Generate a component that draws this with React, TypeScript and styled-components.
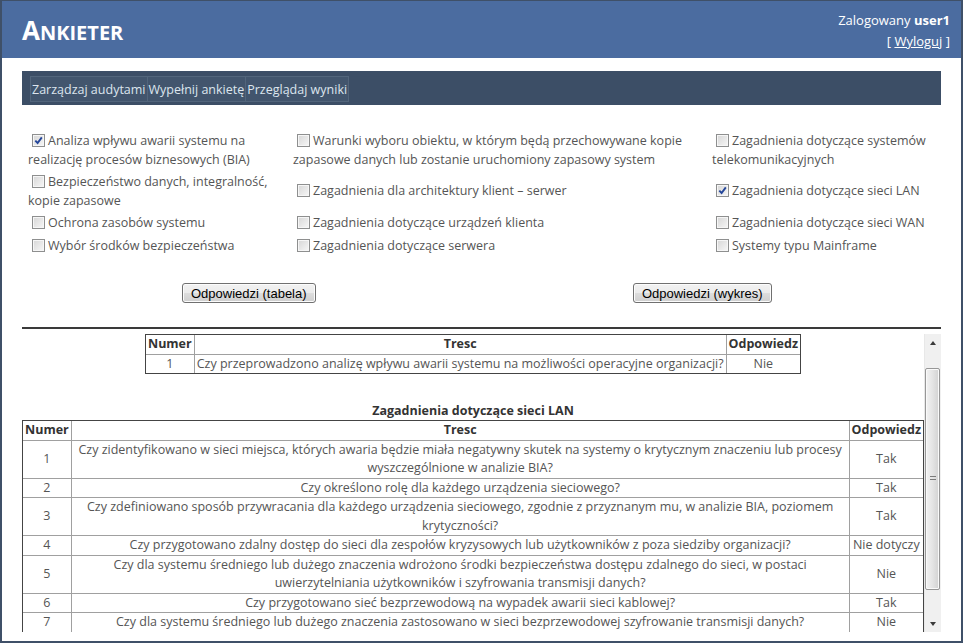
import React from 'react';
import styled, { createGlobalStyle } from 'styled-components';

const GlobalStyle = createGlobalStyle`
  html, body {
    margin: 0;
    padding: 0;
    background: #fff;
  }
  body {
    font-family: "Open Sans", "Noto Sans", sans-serif;
    font-size: 12.5px;
    color: #555;
  }
`;

const Frame = styled.div`
  box-sizing: border-box;
  width: 963px;
  height: 643px;
  border: 2px solid #3f5068;
  border-top-width: 1px;
  display: flex;
  flex-direction: column;
  overflow: hidden;
`;

const Header = styled.header`
  flex: none;
  height: 57px;
  background: #4b6ca0;
  color: #fff;
  display: flex;
  justify-content: space-between;
  align-items: flex-start;
  padding: 0 11px 0 20px;
`;

const Logo = styled.h1`
  margin: 0;
  padding-top: 14px;
  font: 700 26px/30px "Open Sans", sans-serif;
  small {
    font-size: 20px;
  }
`;

const UserBox = styled.div`
  padding-top: 9px;
  text-align: right;
  font-size: 13px;
  line-height: 21px;
  b {
    font-weight: 700;
  }
  a {
    color: #fff;
    text-decoration: underline;
  }
`;

const Main = styled.main`
  flex: 1;
  display: flex;
  flex-direction: column;
  padding: 13px 20px 0;
`;

const Nav = styled.nav`
  height: 34px;
  box-sizing: border-box;
  background: #3c4e66;
  padding: 5px 8px 3px;
  display: flex;
`;

const NavItem = styled.a`
  display: flex;
  align-items: center;
  height: 26px;
  box-sizing: border-box;
  padding: 0 1px;
  background: #42556d;
  border: 1px solid #52657b;
  color: #dde5ee;
  white-space: nowrap;
  & + & {
    margin-left: -1px;
  }
`;

const CheckGrid = styled.div`
  margin-top: 25px;
  padding-left: 6px;
  display: grid;
  grid-template-columns: 265px 419px 1fr;
  align-items: center;
`;

const CheckCell = styled.label`
  padding: 2px 0;
  line-height: 18.5px;
  color: #555;
`;

const Box = styled.span`
  position: relative;
  display: inline-block;
  width: 13px;
  height: 13px;
  box-sizing: border-box;
  margin: 0 3px 0 4px;
  vertical-align: -2px;
  border: 1px solid #8e8f8f;
  box-shadow: inset 0 0 0 1px #f6f6f6;
  background: linear-gradient(135deg, #d6d6d6, #f7f7f7);
  svg {
    position: absolute;
    left: 1px;
    top: 1px;
  }
`;

const ButtonRow = styled.div`
  margin-top: 26px;
  padding-right: 12px;
  display: grid;
  grid-template-columns: 1fr 1fr;
  justify-items: center;
`;

const Button = styled.button`
  height: 20px;
  padding: 0 8px;
  font: 13px "Liberation Sans", Arial, sans-serif;
  color: #000;
  border: 1px solid #707070;
  border-radius: 3px;
  background: linear-gradient(#f2f2f2 0%, #ebebeb 50%, #dddddd 51%, #cfcfcf 100%);
  box-shadow: inset 0 0 0 1px #fcfcfc;
`;

const Rule = styled.hr`
  margin: 24px 0 0;
  height: 2px;
  border: none;
  background: #3a3a3a;
`;

const Results = styled.div`
  margin-top: 5px;
  height: 298px;
  display: flex;
`;

const Viewport = styled.div`
  flex: 1;
  min-width: 0;
  overflow: hidden;
`;

/* drawn scrollbar: headless browsers hide the real one */
const ScrollBar = styled.div`
  flex: none;
  width: 16px;
  display: flex;
  flex-direction: column;
  background: #f0f0f0;
  border-left: 1px solid #e8e8e8;
`;

const ScrollButton = styled.div<{ $down?: boolean }>`
  flex: none;
  height: 17px;
  display: flex;
  align-items: center;
  justify-content: center;
  &::after {
    content: '';
    border-left: 3.5px solid transparent;
    border-right: 3.5px solid transparent;
    ${(p) => (p.$down ? 'border-top: 4px solid #3a3a3a;' : 'border-bottom: 4px solid #3a3a3a;')}
  }
`;

const Track = styled.div`
  flex: 1;
  padding-top: 17px;
`;

const Thumb = styled.div`
  height: 222px;
  margin: 0 1px 0 0;
  box-sizing: border-box;
  border: 1px solid #979797;
  border-radius: 2px;
  background:
    repeating-linear-gradient(to bottom, #7a7a7a 0 1px, transparent 1px 3px) center / 6px 6px no-repeat,
    linear-gradient(to right, #f3f3f3, #e4e4e4 50%, #d2d2d2);
  box-shadow: inset 0 0 0 1px #fafafa;
`;

const Table = styled.table<{ $full?: boolean }>`
  margin: 0 auto;
  width: ${(p) => (p.$full ? '100%' : 'auto')};
  border-collapse: separate;
  border-spacing: 0;
  border: 1px solid #444;
  line-height: 18.5px;
  & + & {
    margin-top: 29px;
  }
  caption {
    font-weight: 700;
    color: #333;
    line-height: 16px;
    padding-bottom: 1px;
  }
  th,
  td {
    padding: 0 2px;
    border-right: 1px solid #a0a0a0;
    border-bottom: 1px solid #a0a0a0;
    text-align: center;
  }
  th {
    font-weight: 700;
    color: #333;
  }
  td {
    color: #555;
  }
  th:last-child,
  td:last-child {
    border-right: none;
  }
  tr:last-child td {
    border-bottom: none;
  }
`;

const NumCol = styled.th`
  width: 40px;
`;

const AnsCol = styled.th`
  width: 68px;
  white-space: nowrap;
`;

const OneLine = styled.td`
  white-space: nowrap;
`;

const Tick = () => (
  <svg width="9" height="9" viewBox="0 0 9 9">
    <path d="M1.3 4.6 L3.6 7 L7.8 1.4" fill="none" stroke="#24469a" strokeWidth="1.9" />
  </svg>
);

const Check = ({ label, checked }: { label: string; checked?: boolean }) => (
  <CheckCell>
    <Box>{checked && <Tick />}</Box>
    {label}
  </CheckCell>
);

const categories = [
  { label: 'Analiza wpływu awarii systemu na realizację procesów biznesowych (BIA)', checked: true },
  { label: 'Warunki wyboru obiektu, w którym będą przechowywane kopie zapasowe danych lub zostanie uruchomiony zapasowy system' },
  { label: 'Zagadnienia dotyczące systemów telekomunikacyjnych' },
  { label: 'Bezpieczeństwo danych, integralność, kopie zapasowe' },
  { label: 'Zagadnienia dla architektury klient – serwer' },
  { label: 'Zagadnienia dotyczące sieci LAN', checked: true },
  { label: 'Ochrona zasobów systemu' },
  { label: 'Zagadnienia dotyczące urządzeń klienta' },
  { label: 'Zagadnienia dotyczące sieci WAN' },
  { label: 'Wybór środków bezpieczeństwa' },
  { label: 'Zagadnienia dotyczące serwera' },
  { label: 'Systemy typu Mainframe' },
];

const biaRows = [
  ['1', 'Czy przeprowadzono analizę wpływu awarii systemu na możliwości operacyjne organizacji?', 'Nie'],
];

const lanRows = [
  ['1', 'Czy zidentyfikowano w sieci miejsca, których awaria będzie miała negatywny skutek na systemy o krytycznym znaczeniu lub procesy wyszczególnione w analizie BIA?', 'Tak'],
  ['2', 'Czy określono rolę dla każdego urządzenia sieciowego?', 'Tak'],
  ['3', 'Czy zdefiniowano sposób przywracania dla każdego urządzenia sieciowego, zgodnie z przyznanym mu, w analizie BIA, poziomem krytyczności?', 'Tak'],
  ['4', 'Czy przygotowano zdalny dostęp do sieci dla zespołów kryzysowych lub użytkowników z poza siedziby organizacji?', 'Nie dotyczy'],
  ['5', 'Czy dla systemu średniego lub dużego znaczenia wdrożono środki bezpieczeństwa dostępu zdalnego do sieci, w postaci uwierzytelniania użytkowników i szyfrowania transmisji danych?', 'Nie'],
  ['6', 'Czy przygotowano sieć bezprzewodową na wypadek awarii sieci kablowej?', 'Tak'],
  ['7', 'Czy dla systemu średniego lub dużego znaczenia zastosowano w sieci bezprzewodowej szyfrowanie transmisji danych?', 'Nie'],
];

const ResultTable = ({ title, rows, full }: { title?: string; rows: string[][]; full?: boolean }) => (
  <Table $full={full}>
    {title && <caption>{title}</caption>}
    <thead>
      <tr>
        <NumCol>Numer</NumCol>
        <th>Tresc</th>
        <AnsCol>Odpowiedz</AnsCol>
      </tr>
    </thead>
    <tbody>
      {rows.map((r) => (
        <tr key={r[0]}>
          <td>{r[0]}</td>
          {full ? <td>{r[1]}</td> : <OneLine>{r[1]}</OneLine>}
          <td>{r[2]}</td>
        </tr>
      ))}
    </tbody>
  </Table>
);

const App: React.FC = () => {
  return (
    <>
      <GlobalStyle />
      <Frame>
        <Header>
          <Logo>
            A<small>NKIETER</small>
          </Logo>
          <UserBox>
            Zalogowany <b>user1</b>
            <br />[ <a href="#">Wyloguj</a> ]
          </UserBox>
        </Header>
        <Main>
          <Nav>
            <NavItem>Zarządzaj audytami</NavItem>
            <NavItem>Wypełnij ankietę</NavItem>
            <NavItem>Przeglądaj wyniki</NavItem>
          </Nav>
          <CheckGrid>
            {categories.map((c) => (
              <Check key={c.label} label={c.label} checked={c.checked} />
            ))}
          </CheckGrid>
          <ButtonRow>
            <Button>Odpowiedzi (tabela)</Button>
            <Button>Odpowiedzi (wykres)</Button>
          </ButtonRow>
          <Rule />
          <Results>
            <Viewport>
              <ResultTable rows={biaRows} />
              <ResultTable title="Zagadnienia dotyczące sieci LAN" rows={lanRows} full />
            </Viewport>
            <ScrollBar>
              <ScrollButton />
              <Track>
                <Thumb />
              </Track>
              <ScrollButton $down />
            </ScrollBar>
          </Results>
        </Main>
      </Frame>
    </>
  );
};

export default App;
